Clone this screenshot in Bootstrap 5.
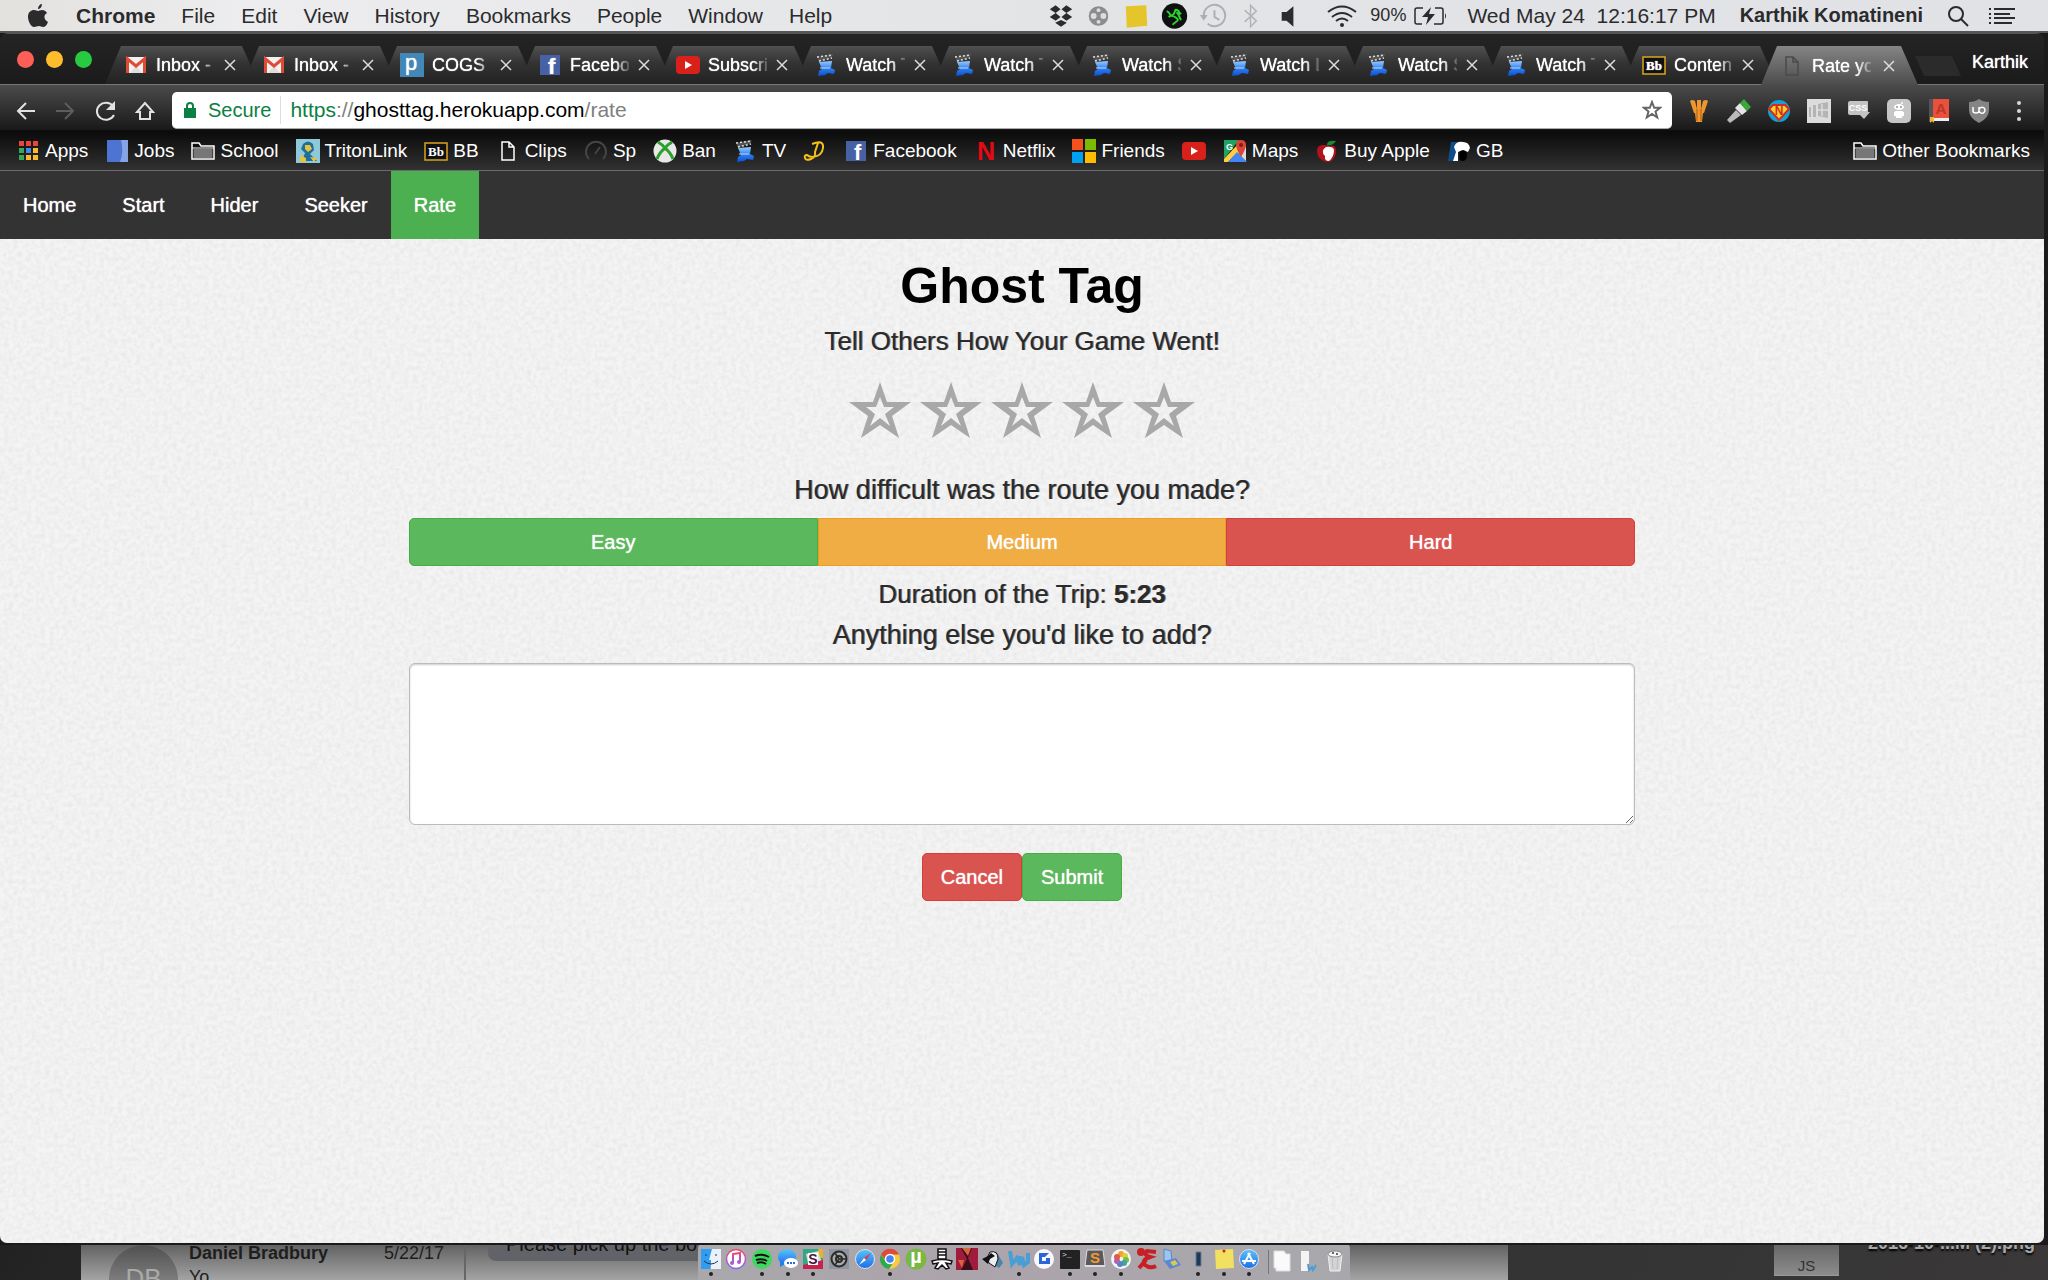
<!DOCTYPE html>
<html lang="en">
<head>
<meta charset="utf-8">
<meta name="viewport" content="width=device-width, initial-scale=1">
<title>Rate your game</title>
<link href="https://cdn.jsdelivr.net/npm/bootstrap@5.3.0/dist/css/bootstrap.min.css" rel="stylesheet">
<style>
body{font-family:"Liberation Sans",Arial,sans-serif;font-size:20px;line-height:30px;background:#1b1b1b;color:#2a2a2a;overflow:hidden}
svg{display:block;flex:none}
a{color:inherit;text-decoration:none}
/* system menu bar */
.menubar{height:33px;background:linear-gradient(90deg,#e2e1de,#ededef 12%,#e3e4e6 50%,#e1e2e6);border-bottom:2px solid #55565a;font-size:21px;line-height:31px;padding:0 33px 0 28px;color:#2b2b2d;white-space:nowrap}
.menus{gap:26px}
.slot{width:38px}
.slot-wide{width:58px}
.charge{font-size:18px}
.user-name{font-size:20px}
/* browser window */
.win{margin-right:4px;border-radius:8px 8px 7px 7px;overflow:hidden;background:#222;box-shadow:0 2px 0 #222}
.strip{height:51px;background:linear-gradient(#242424,#1b1b1b);padding-top:12px;border-top:1px solid #555;color:#fff;font-size:18px;text-shadow:0 0 1px #fff}
.lights{gap:12px;padding-left:17px;width:105px;padding-top:5px}
.light{width:17px;height:17px;border-radius:50%}
.tab-item{flex:0 1 154px;height:38px;margin-right:-16px;padding:0 23px 0 19px;background:linear-gradient(#505050,#333 45%,#222);clip-path:polygon(16px 0,calc(100% - 17px) 0,100% 100%,0 100%);line-height:38px}
.tab-wrap{display:flex;flex:1;min-width:0}
.tab-on{background:linear-gradient(#858585,#4c4c4c);height:39px;flex-basis:157px}
.fav{width:24px;height:24px}
.tab-name{width:59px;overflow:hidden;white-space:nowrap;margin-left:8px;-webkit-mask-image:linear-gradient(90deg,#000 75%,#0003 100%);mask-image:linear-gradient(90deg,#000 75%,#0003 100%)}
.bare{background:none;border:0;padding:0;color:inherit}
.newtab{width:46px;height:20px;margin:10px 0 0 13px;background:#2b2b2b;clip-path:polygon(0 0,37px 0,100% 100%,9px 100%)}
.who{margin-right:16px;line-height:32px}
.toolbar{height:48px;background:linear-gradient(#4b4b4b,#191919);border-top:1px solid #777;border-bottom:2px solid #0c0c0c;padding:6px 5px 0 5px}
.tool{width:40px}
.omni{height:37px;border-radius:5px;background:#fff;margin:0 7px;padding:0 10px 0 12px;border-bottom:1px solid #aaa}
.secure{color:#0b8043;border-right:1px solid #ddd;padding-right:9px;margin-right:9px;line-height:28px}
.url{font-size:21px;color:#000}
.url .s{color:#0b8043}.url .g{color:#808080}
.marks{height:38px;background:linear-gradient(#0b0b0b,#313131);padding:0 14px 0 16px;font-size:19px;color:#fff;gap:17px;white-space:nowrap}
.marks a{display:flex;align-items:center;gap:5px}
/* site */
.topnav{height:69px;background:#333;border-top:1px solid #6b6b6b;color:#fff;text-shadow:0 0 1px #fff}
.topnav a{padding:0 23px;line-height:68px}
.topnav .here{background:#4caf50}
.site{background:#f4f4f4}
.grain{position:absolute;inset:0;width:100%;height:100%}
.glow{position:absolute;left:30%;right:30%;bottom:0;height:80px;background:radial-gradient(closest-side at 50% 100%,#0002,#0000)}
.pane{position:relative;width:60%;padding-top:17px}
.pane h1{font-size:50px;line-height:60px;font-weight:700;color:#000;margin-bottom:10px}
.mid,.ask{line-height:30px;font-weight:400;color:#2a2a2a;text-shadow:1px 0 0 #2a2a2a99;margin:0}
.mid{font-size:26px}
.ask{font-size:27px}
.stars{gap:9px;margin:26px 0 37px}
.pane .btn{font-size:20px;line-height:30px;padding:8px 18px;border-radius:5px;color:#fff;text-shadow:0 0 1px #fff}
.b-green{background:#5cb85c;border-color:#45ae45}
.b-amber{background:#f0ad44;border-color:#ee9d24}
.b-red{background:#d9534f;border-color:#d43f3a}
.pane .levels .btn{flex:1}
.pane .levels .b-green{border-radius:5px 0 0 5px}.pane .levels .b-amber{border-radius:0}.pane .levels .b-red{border-radius:0 5px 5px 0}
.pane .form-control{height:162px;border:1px solid #bbb;border-radius:6px;box-shadow:inset 0 1px 2px #0003}
.pane .gap-s{margin-top:13px}
.pane .gap-xs{margin-top:11px}
/* desktop behind the window */
.desk{height:37px;background:linear-gradient(120deg,#222,#484646 45%,#333 70%,#3a3838);position:relative;overflow:hidden;font-size:18px;border-top:2px solid #1a1a1a}
.chat{width:calc(70% - 7px);margin-left:81px;background:linear-gradient(#626262,#a4a4a4);color:#1e1e1e}
.people{width:385px;border-right:2px solid #666;padding:0 20px 0 28px}
.ava{width:69px;height:69px;border-radius:50%;background:linear-gradient(#505050,#7c7c7c 50%);color:#aaa;font-size:26px;line-height:66px;text-align:center;flex:none;margin-right:11px}
.who-line{line-height:22px;margin-top:-3px}
.yo{line-height:26px}
.bubble{margin-left:22px;height:16px;background:#626368;padding:0 14px 0 18px;border-radius:0 0 0 8px;overflow:hidden;color:#111;font-size:20px;display:flex;align-items:flex-end;line-height:34px}
.doc-js{width:65px;height:31px;background:linear-gradient(#666,#8d8d8d);margin-left:auto;color:#333;font-size:15px;padding-top:9px;text-align:center;line-height:24px;border-bottom:1px solid #999}
.fname{color:#a8a8a8;font-weight:700;margin:-17px 13px 0 29px;text-shadow:0 2px 2px #000;white-space:nowrap}
.dock{position:absolute;left:50%;transform:translateX(-50%);bottom:0;width:652px;height:37px;border-radius:6px 6px 0 0;background:linear-gradient(90deg,#a9a8ab,#aca4ab 40%,#a8a8ac);border-top:1px solid #bcbcbc;padding:4px 2px 0 0}
.apps{width:564px;display:flex}
.apps a{flex:1;display:flex;flex-direction:column;align-items:center}
.run::after{content:"";width:4px;height:4px;border-radius:50%;background:#222;margin-top:2px}
.rest{flex:1;display:flex;justify-content:space-around;border-left:1px solid #777;margin:2px 0 6px 6px}
</style>
<script src="https://cdn.jsdelivr.net/npm/bootstrap@5.3.0/dist/js/bootstrap.bundle.min.js"></script>
</head>
<body class="vh-100 d-flex flex-column">
<svg width="0" height="0" class="position-absolute" aria-hidden="true">
<defs>
<linearGradient id="bl" x1="0" y1="0" x2="0" y2="1"><stop offset="0" stop-color="#9cf"/><stop offset=".5" stop-color="#2f7ff0"/><stop offset="1" stop-color="#0b4fd0"/></linearGradient>
<linearGradient id="sk" x1="0" y1="0" x2="0" y2="1"><stop offset="0" stop-color="#5ac3fb"/><stop offset="1" stop-color="#1a6de8"/></linearGradient>
<linearGradient id="mu" x1="0" y1="0" x2="0" y2="1"><stop offset="0" stop-color="#f5466b"/><stop offset="1" stop-color="#7d6cf0"/></linearGradient>
<filter id="nz" x="0" y="0" width="100%" height="100%"><feTurbulence type="fractalNoise" baseFrequency=".22" numOctaves="3" seed="4"/><feColorMatrix values="0 0 0 0 0  0 0 0 0 0  0 0 0 0 0  .5 0 0 0 -.15"/></filter>
</defs>
<symbol id="gmail" viewBox="0 0 24 24"><path fill="#f4f1ee" d="M3 4h18v16H3z"/><path fill="#ddd" d="M6 20 12 13l6 7z"/><path fill="none" stroke="#dd4b39" stroke-width="3" d="M3.500 20V6L12 13l8.500-7v14"/></symbol>
<symbol id="yt" viewBox="0 0 24 24"><rect y="3" width="24" height="18" rx="4" fill="#d9211c"/><path fill="#fff" d="m9 8 7 4-7 4z"/></symbol>
<symbol id="clap" viewBox="0 0 24 24"><path fill="#555" d="M3 4 18 1v3L5 9z"/><path stroke="#ddd" stroke-width="1.500" stroke-dasharray="2 2" fill="none" d="M3 4 19 2M5 8 18 5"/><path fill="url(#bl)" d="m5 9 13-1-1 7 4 2-1 4-6-1-3 2-7 1 1-5 3-2z"/><path stroke="#bfdcff" d="M6 15h10"/></symbol>
<symbol id="page" viewBox="0 0 24 24"><path fill="none" stroke="currentColor" stroke-width="1.500" d="M6 3h7l5 5v13H6zM13 3v5h5"/></symbol>
<symbol id="fold" viewBox="0 0 24 24"><path fill="#111" stroke="#fff" stroke-width="1.500" d="M1 20V4h7l2 3h13v13z"/><path fill="#777" d="M2.500 10h19v9h-19z"/><path stroke="#fff" d="M1 9h22"/></symbol>
<symbol id="x" viewBox="0 0 12 12"><path stroke="#ddd" stroke-width="1.500" d="m1 1 10 10M11 1 1 11"/></symbol>
<symbol id="star" viewBox="0 0 62 56"><path fill="#a8a8a8" fill-rule="evenodd" d="M31 0 38 20H62L43 34 50 56 31 43 12 56 19 34 0 20H24ZM31 15 27 25H17L26 32 21 44 31 36 41 44 36 32 45 25H35Z"/></symbol>
</svg>

<header class="menubar d-flex align-items-center">
  <svg width="20" height="23" viewBox="0 0 20 23"><path fill="#2b2b2d" d="M14 6c2 0 4 1 5 3-4 2-3 7 1 9-1 3-3 5-5 5s-2-1-4-1-3 1-5 1C3 23 0 17 0 13c0-5 3-7 6-7 2 0 3 1 4 1s2-1 4-1zM10 5c0-3 2-5 4-5 0 3-2 5-4 5z"/></svg>
  <nav class="menus d-flex ms-4 ps-1"><a href="#"><b>Chrome</b></a><a href="#">File</a><a href="#">Edit</a><a href="#">View</a><a href="#">History</a><a href="#">Bookmarks</a><a href="#">People</a><a href="#">Window</a><a href="#">Help</a></nav>
  <div class="d-flex align-items-center ms-auto">
    <svg class="slot" height="26" viewBox="-8 0 39 26"><path fill="#2b2b2d" d="m6 2 5 4-5 4-6-4zM17 2l6 4-6 4-5-4zM6 10l5 4-5 4-6-4zM17 10l6 4-6 4-5-4zM11.500 17l6 3-6 4-6-4z"/></svg>
    <svg class="slot" height="26" viewBox="-9 0 39 26"><circle cx="10" cy="13" r="10" fill="#8c8c8e"/><g fill="#ddd"><circle cx="10" cy="7" r="2"/><circle cx="5" cy="13" r="3"/><circle cx="15" cy="13" r="3"/><circle cx="10" cy="19" r="2"/></g></svg>
    <svg class="slot" height="26" viewBox="-8 0 39 26"><path fill="#e4c62a" d="m0 3 21-1 1 21L1 25z"/></svg>
    <svg class="slot" height="26" viewBox="-6 0 39 26"><circle cx="13" cy="13" r="13" fill="#101010"/><path fill="none" stroke="#2bd52b" stroke-width="2" d="M5 8c5 2 2 6 6 4s1-7 5-5 0 5 4 3M7 14c3-3 7 0 9 2s-3 3-5 6M15 9c4 3 2 6 5 8"/></svg>
    <svg class="slot" height="26" viewBox="-6 0 39 26" fill="none" stroke="#aeaeb2" stroke-width="2"><path d="M4 13a11 11 0 1 1 4 8M15 7v7l5 3"/><path fill="#aeaeb2" stroke="none" d="M0 12h8l-4 6z"/></svg>
    <svg class="slot" height="26" viewBox="-12 0 39 26" fill="none" stroke="#b4b4b8" stroke-width="1.500"><path d="m1 7 12 11-6 6V2l6 6L1 19"/></svg>
    <svg class="slot" height="26" viewBox="-12 0 39 26"><path fill="#2b2b2d" d="M0 9h5l7-6v21l-7-6H0z"/></svg>
    <svg class="slot-wide" height="26" viewBox="-19 0 58 26" fill="none" stroke="#2b2b2d" stroke-width="2"><path d="M1 9q14-11 28 0M5 14q10-8 20 0M9 18q6-5 12 0"/><circle cx="15" cy="22" r="2" fill="#2b2b2d" stroke="none"/></svg>
    <span class="charge ms-1">90%</span>
    <svg class="ms-2" width="33" height="20" viewBox="0 0 33 20" fill="none" stroke="#2b2b2d" stroke-width="1.500"><path d="M9 2H3Q1 2 1 4v12q0 2 2 2h5M21 2h6q2 0 2 2v12q0 2-2 2h-7"/><path fill="#2b2b2d" stroke="none" d="m17 1-9 10h6l-2 8 9-11h-6zM31 7q2 3 0 6z"/></svg>
    <span class="ms-3 ps-1">Wed May 24 &nbsp;12:16:17 PM</span>
    <b class="user-name ms-4">Karthik Komatineni</b>
    <svg class="ms-4 me-1" width="22" height="22" viewBox="0 0 22 22" fill="none" stroke="#2b2b2d" stroke-width="2"><circle cx="9" cy="9" r="7"/><path d="m14 14 7 7"/></svg>
    <svg class="ms-3" width="26" height="16" viewBox="0 0 26 16" stroke="#2b2b2d" stroke-width="2"><path d="M0 1h2M5 1h21M0 6h2M5 6h16M0 10h2M5 10h21M0 15h2M5 15h18"/></svg>
  </div>
</header>

<div class="win flex-grow-1 d-flex flex-column">
  <div class="strip d-flex align-items-start">
    <div class="lights d-flex"><span class="light" style="background:#ff5f57"></span><span class="light" style="background:#ffbd2e"></span><span class="light" style="background:#28ca41"></span></div>
    <div class="tab-wrap">
      <div class="tab-item d-flex align-items-center"><svg class="fav"><use href="#gmail"/></svg><a class="tab-name" href="#">Inbox -</a><button class="bare ms-auto" aria-label="Close"><svg width="12" height="12"><use href="#x"/></svg></button></div>
      <div class="tab-item d-flex align-items-center"><svg class="fav"><use href="#gmail"/></svg><a class="tab-name" href="#">Inbox -</a><button class="bare ms-auto" aria-label="Close"><svg width="12" height="12"><use href="#x"/></svg></button></div>
      <div class="tab-item d-flex align-items-center"><svg class="fav" viewBox="0 0 24 24"><path fill="#4187b8" d="M0 0h24v24H0z"/><text x="5" y="17" font-size="22" font-family="Liberation Sans" fill="#fff">p</text></svg><a class="tab-name" href="#">COGS 1</a><button class="bare ms-auto" aria-label="Close"><svg width="12" height="12"><use href="#x"/></svg></button></div>
      <div class="tab-item d-flex align-items-center"><svg class="fav" viewBox="0 0 24 24"><rect x="2" y="2" width="20" height="20" fill="#4662a5"/><text x="10" y="21" font-size="22" font-weight="700" font-family="Liberation Sans" fill="#fff">f</text></svg><a class="tab-name" href="#">Facebo</a><button class="bare ms-auto" aria-label="Close"><svg width="12" height="12"><use href="#x"/></svg></button></div>
      <div class="tab-item d-flex align-items-center"><svg class="fav"><use href="#yt"/></svg><a class="tab-name" href="#">Subscri</a><button class="bare ms-auto" aria-label="Close"><svg width="12" height="12"><use href="#x"/></svg></button></div>
      <div class="tab-item d-flex align-items-center"><svg class="fav"><use href="#clap"/></svg><a class="tab-name" href="#">Watch T</a><button class="bare ms-auto" aria-label="Close"><svg width="12" height="12"><use href="#x"/></svg></button></div>
      <div class="tab-item d-flex align-items-center"><svg class="fav"><use href="#clap"/></svg><a class="tab-name" href="#">Watch T</a><button class="bare ms-auto" aria-label="Close"><svg width="12" height="12"><use href="#x"/></svg></button></div>
      <div class="tab-item d-flex align-items-center"><svg class="fav"><use href="#clap"/></svg><a class="tab-name" href="#">Watch S</a><button class="bare ms-auto" aria-label="Close"><svg width="12" height="12"><use href="#x"/></svg></button></div>
      <div class="tab-item d-flex align-items-center"><svg class="fav"><use href="#clap"/></svg><a class="tab-name" href="#">Watch L</a><button class="bare ms-auto" aria-label="Close"><svg width="12" height="12"><use href="#x"/></svg></button></div>
      <div class="tab-item d-flex align-items-center"><svg class="fav"><use href="#clap"/></svg><a class="tab-name" href="#">Watch S</a><button class="bare ms-auto" aria-label="Close"><svg width="12" height="12"><use href="#x"/></svg></button></div>
      <div class="tab-item d-flex align-items-center"><svg class="fav"><use href="#clap"/></svg><a class="tab-name" href="#">Watch T</a><button class="bare ms-auto" aria-label="Close"><svg width="12" height="12"><use href="#x"/></svg></button></div>
      <div class="tab-item d-flex align-items-center"><svg class="fav" viewBox="0 0 24 24"><rect x="1" y="4" width="22" height="17" fill="#111" stroke="#d9a520" stroke-width="1.500"/><text x="12" y="17" font-size="13" text-anchor="middle" font-weight="700" font-family="Liberation Serif" fill="#fff">Bb</text></svg><a class="tab-name" href="#">Conten</a><button class="bare ms-auto" aria-label="Close"><svg width="12" height="12"><use href="#x"/></svg></button></div>
      <div class="tab-item tab-on d-flex align-items-center"><svg class="fav" color="#4a4a4a"><use href="#page"/></svg><a class="tab-name" href="#">Rate yo</a><button class="bare ms-auto" aria-label="Close"><svg width="12" height="12"><use href="#x"/></svg></button></div>
      <button class="bare newtab" aria-label="New tab"></button>
    </div>
    <a class="who" href="#">Karthik</a>
  </div>

  <div class="toolbar d-flex align-items-center">
    <button class="bare tool" aria-label="Back"><svg width="40" height="24" viewBox="-11 -2 40 24" fill="none" stroke="#e2e2e2" stroke-width="2"><path d="M19 10H2M10 2l-8 8 8 8"/></svg></button>
    <button class="bare tool" aria-label="Forward"><svg width="40" height="24" viewBox="-11 -2 40 24" fill="none" stroke="#5d5d5d" stroke-width="2"><path d="M0 10h17M9 2l8 8-8 8"/></svg></button>
    <button class="bare tool" aria-label="Reload"><svg width="40" height="24" viewBox="-11 -2 40 24" fill="none" stroke="#e2e2e2" stroke-width="2"><path d="M18 14a9 8.500 0 1 1-1-9"/><path fill="#e2e2e2" stroke="none" d="M19 0v9h-9z"/></svg></button>
    <button class="bare tool" aria-label="Home"><svg width="40" height="24" viewBox="-11 -2 40 24" fill="none" stroke="#e2e2e2" stroke-width="2"><path d="M9 2 1 11h3v7h10v-7h3z"/></svg></button>
    <div class="omni flex-grow-1 d-flex align-items-center">
      <div class="secure d-flex align-items-center gap-2"><svg class="me-1" width="12" height="16" viewBox="0 0 12 16"><path fill="#0b8043" d="M0 6h12v10H0z"/><path fill="none" stroke="#0b8043" stroke-width="2" d="M3 7V4q0-3 3-3t3 3v3"/></svg>Secure</div>
      <a class="url" href="#"><span class="s">https</span><span class="g">://</span>ghosttag.herokuapp.com<span class="g">/rate</span></a>
      <button class="bare ms-auto" aria-label="Bookmark"><svg width="20" height="20" viewBox="0 0 20 20" fill="none" stroke="#666" stroke-width="2"><path d="m10 2 2.200 5.800H18l-4.500 3.700 1.700 6L10 14l-5.200 3.500 1.700-6L2 7.800h5.800z"/></svg></button>
    </div>
    <svg class="tool" height="24" viewBox="-8 0 40 24"><path fill="#f0962e" d="M3 2q2-2 5 0l2 8V1h4v9l2-8q3-2 5 0l-4 12h-1l-1 9H9l-1-9H7z"/><path stroke="#a85a10" d="M10 10v12M14 10v12"/></svg>
    <svg class="tool" height="24" viewBox="-8 0 40 24"><path fill="#bbb" d="m0 21 9-10 5 5-11 8z"/><path fill="#e4e4e4" d="m8 9 5-5 7 8-5 4z"/><path fill="#38a838" d="m13 4 4-4 7 8-4 4z"/></svg>
    <svg class="tool" height="24" viewBox="-8 0 40 24"><circle cx="12" cy="12" r="11" fill="#15a0d8"/><path fill="#f6d32a" stroke="#d62b1f" stroke-width="2" d="M6 6h12l4 4-10 11L2 10z"/><text x="12" y="16" text-anchor="middle" font-size="12" font-weight="700" font-family="Liberation Sans" fill="#d62b1f">N</text></svg>
    <svg class="tool" height="24" viewBox="-8 0 40 24"><path fill="#dcdcdc" d="M0 0h24v24H0z"/><path fill="#b4b4b4" d="M2 8h2v10H2zM6 6h3v12H6zM11 5l10-2v16l-10-2z"/><path stroke="#ddd" stroke-width="1.500" d="M15 5v12M11 11h10"/></svg>
    <svg class="tool" height="24" viewBox="-8 0 40 24"><path fill="#c4c4c4" d="M3 2h17q1 0 1 1v10h2l-6 7-4-4H3q-2 0-2-2V4q0-2 2-2z"/><text x="11" y="12" text-anchor="middle" font-size="9" font-weight="700" font-family="Liberation Sans" fill="#fff">CSS</text></svg>
    <svg class="tool" height="24" viewBox="-8 0 40 24"><rect width="24" height="24" rx="5" fill="#c6c6c6"/><g fill="#fff"><ellipse cx="12" cy="8" rx="5" ry="3"/><path d="M8 12h8l-1 7h-6z"/><path d="M7 13h2v4H7zM15 13h2v4h-2z"/><circle cx="15" cy="4" r="1"/></g><circle cx="10" cy="8" r="1" fill="#999"/><circle cx="14" cy="8" r="1" fill="#999"/></svg>
    <svg class="tool" height="24" viewBox="-8 0 40 24"><path fill="#e9513c" d="M2 0h20v20H2z"/><path fill="#555" d="M2 0h4v23H2z"/><path fill="#eee" d="M6 19h16v3H6z"/><path fill="#f4b92a" d="M3 18h4v6l-2-2-2 2z"/><text x="14" y="15" text-anchor="middle" font-size="15" font-weight="700" font-family="Liberation Sans" fill="#b93826">A</text></svg>
    <svg class="tool" height="24" viewBox="-8 0 40 24"><path fill="#858585" d="M12 0q4 3 10 3v8q0 8-10 13Q2 19 2 11V3q6 0 10-3z"/><path fill="none" stroke="#fff" stroke-width="1.500" d="M6 8v4q0 2 3 2t3-2V8M12 11a3 3 0 1 1 0 .5"/></svg>
    <svg class="tool" height="24" viewBox="-8 0 40 24" fill="#d8d8d8"><circle cx="12" cy="4" r="2"/><circle cx="12" cy="12" r="2"/><circle cx="12" cy="20" r="2"/></svg>
  </div>

  <nav class="marks d-flex align-items-center">
    <a href="#"><svg class="fav" viewBox="0 0 24 24"><path fill="#e8453c" d="M3 2h5v5H3zM10 2h5v5h-5zM17 2h5v5h-5z"/><path fill="#3aa757" d="M3 9h5v5H3z"/><path fill="#4688f1" d="M10 9h5v5h-5z"/><path fill="#f9bb2d" d="M17 9h5v5h-5zM10 16h5v5h-5zM17 16h5v5h-5z"/><path fill="#3aa757" d="M3 16h5v5H3z"/></svg>Apps</a>
    <a href="#"><svg class="fav" viewBox="0 0 24 24"><path fill="#4d74d2" d="M2 1h21v22H2z"/><path fill="#86a4e4" d="M23 1v22h-8q4-10 1-22z"/></svg>Jobs</a>
    <a href="#"><svg class="fav"><use href="#fold"/></svg>School</a>
    <a href="#"><svg class="fav" viewBox="0 0 24 24"><path fill="#8ec9da" d="M0 0h24v24H0z"/><path fill="#1f6f9a" d="M7 5q5-5 10 0l1 6-4 4 7 7H6l3-8-4-4z"/><path fill="#e8c33c" d="M9 6h5l2 4-4 3-3-3zM4 16l6 3v4H4zM14 18l7 1-3 4z"/></svg>TritonLink</a>
    <a href="#"><svg class="fav" viewBox="0 0 24 24"><rect x="1" y="4" width="22" height="17" fill="#111" stroke="#d9a520" stroke-width="1.500"/><text x="12" y="17" font-size="13" text-anchor="middle" font-weight="700" font-family="Liberation Serif" fill="#fff">Bb</text></svg>BB</a>
    <a href="#"><svg class="fav"><use href="#page"/></svg>Clips</a>
    <a href="#"><svg class="fav" viewBox="0 0 24 24" fill="none" stroke="#444" stroke-width="2"><path d="M5 20a10 10 0 1 1 14 0M11 15l5-7"/></svg>Sp</a>
    <a href="#"><svg class="fav" viewBox="0 0 24 24"><circle cx="12" cy="12" r="11.500" fill="#e8e8e8"/><path fill="none" stroke="#2ca02c" stroke-width="3" d="M5 3q5 3 7 6 2-3 7-6M12 9q-6 5-8 11M12 9q6 5 8 11"/></svg>Ban</a>
    <a href="#"><svg class="fav"><use href="#clap"/></svg>TV</a>
    <a href="#" aria-label="D"><svg class="fav" viewBox="0 0 24 24" fill="none" stroke="#f2c11c" stroke-width="2"><path d="M9 5q12-5 11 4-1 8-10 9-4 0-6-2-3 0-2 3t6 1 4-7l3-9"/></svg></a>
    <a href="#"><svg class="fav" viewBox="0 0 24 24"><rect x="2" y="2" width="20" height="20" fill="#4662a5"/><text x="10" y="21" font-size="22" font-weight="700" font-family="Liberation Sans" fill="#fff">f</text></svg>Facebook</a>
    <a href="#"><svg class="fav" viewBox="0 0 24 24"><text x="12" y="21" text-anchor="middle" font-size="25" font-weight="700" font-family="Liberation Sans" fill="#e50914">N</text></svg>Netflix</a>
    <a href="#"><svg class="fav" viewBox="0 0 24 24"><path fill="#f4511e" d="M0 0h11v11H0z"/><path fill="#7cbb00" d="M13 0h11v11H13z"/><path fill="#00a1f1" d="M0 13h11v11H0z"/><path fill="#ffbb00" d="M13 13h11v11H13z"/></svg>Friends</a>
    <a href="#" aria-label="YouTube"><svg class="fav"><use href="#yt"/></svg></a>
    <a href="#"><svg class="fav" viewBox="0 0 24 24"><path fill="#1da462" d="M1 1h15L1 20z"/><path fill="#ffcd40" d="M1 20 16 4l4 4L5 23H1z"/><path fill="#4285f4" d="M5 23 14 13l10 10z"/><path fill="#ddd" d="m14 13 9-6v15z"/><path fill="#db4437" d="M13 6q0-5 5-5t5 5q0 4-5 12-5-8-5-12z"/><circle cx="18" cy="6" r="2" fill="#7d1f15"/><text x="3" y="11" font-size="9" font-weight="700" font-family="Liberation Sans" fill="#fff">G</text></svg>Maps</a>
    <a href="#"><svg class="fav" viewBox="0 0 24 24"><path fill="#b3121d" d="M8 6q5 0 6 1 7-2 7 5t-6 11q-2-1-4 0Q2 20 2 12q0-6 6-6z"/><path fill="#fff" d="M11 8q7-1 8 3 0 7-5 11-5 0-4-5-5-5 1-9z"/><path fill="#1c8a33" d="M12 6q0-5 9-4-3 5-9 4z"/></svg>Buy Apple</a>
    <a href="#"><svg class="fav" viewBox="0 0 24 24"><path fill="#0e4c8c" d="M4 3h8L8 22H1z"/><path fill="#fff" d="M7 8q2-6 9-5 6 0 7 6l-2 4-5-2-5 2v9H6l3-9z"/><path fill="#000" d="M13 12q7-2 7 4 0 6-5 6-4 0-2-10z"/></svg>GB</a>
    <a href="#" class="ms-auto"><svg class="fav"><use href="#fold"/></svg>Other Bookmarks</a>
  </nav>

  <nav class="topnav d-flex"><a href="#">Home</a><a href="#">Start</a><a href="#">Hider</a><a href="#">Seeker</a><a class="here" href="#">Rate</a></nav>

  <main class="site flex-grow-1 position-relative">
    <svg class="grain" aria-hidden="true"><rect width="100%" height="100%" filter="url(#nz)" opacity=".16"/></svg>
    <div class="glow"></div>
    <form class="pane mx-auto text-center">
      <h1>Ghost Tag</h1>
      <h2 class="mid">Tell Others How Your Game Went!</h2>
      <div class="stars d-flex justify-content-center" role="radiogroup" aria-label="Rating">
        <label><input class="visually-hidden" type="radio" name="r" aria-label="1"><svg width="62" height="56"><use href="#star"/></svg></label>
        <label><input class="visually-hidden" type="radio" name="r" aria-label="2"><svg width="62" height="56"><use href="#star"/></svg></label>
        <label><input class="visually-hidden" type="radio" name="r" aria-label="3"><svg width="62" height="56"><use href="#star"/></svg></label>
        <label><input class="visually-hidden" type="radio" name="r" aria-label="4"><svg width="62" height="56"><use href="#star"/></svg></label>
        <label><input class="visually-hidden" type="radio" name="r" aria-label="5"><svg width="62" height="56"><use href="#star"/></svg></label>
      </div>
      <h2 class="ask">How difficult was the route you made?</h2>
      <div class="levels d-flex gap-s"><button type="button" class="btn b-green">Easy</button><button type="button" class="btn b-amber">Medium</button><button type="button" class="btn b-red">Hard</button></div>
      <div class="mid gap-s">Duration of the Trip: <b>5:23</b></div>
      <label class="ask d-block gap-xs" for="more">Anything else you'd like to add?</label>
      <textarea id="more" class="form-control gap-s"></textarea>
      <div class="d-flex justify-content-center mt-4 pt-1"><button type="button" class="btn b-red">Cancel</button><button type="submit" class="btn b-green">Submit</button></div>
    </form>
  </main>
</div>

<div class="desk d-flex align-items-start">
  <div class="chat d-flex h-100 align-items-start">
    <div class="people d-flex h-100 align-items-start">
      <div class="ava">DB</div>
      <div class="flex-grow-1"><div class="who-line d-flex justify-content-between"><b>Daniel Bradbury</b><span>5/22/17</span></div><div class="yo">Yo</div></div>
    </div>
    <div class="bubble">Please pick up the box</div>
  </div>
  <div class="doc-js">JS</div>
  <div class="fname">2016-10-...M (2).png</div>
  <div class="dock d-flex">
    <div class="apps">
      <a class="run" href="#"><svg width="22" height="22" viewBox="0 0 22 22"><path fill="#2f9df4" d="M1 1h12L10 21H1z"/><path fill="#e9f2fb" d="M12 1h9v20H11V12H9z"/><path stroke="#234" fill="none" d="M6 6v2M16 6v2M4 13q7 6 14 0"/></svg></a>
      <a href="#"><svg width="22" height="22" viewBox="0 0 22 22"><circle cx="11" cy="11" r="9.500" fill="#fff" stroke="url(#mu)" stroke-width="1.500"/><path fill="none" stroke="url(#mu)" stroke-width="2" d="M8 15V6l7-1v9"/><circle cx="7" cy="15" r="2" fill="#b25ad0"/><circle cx="14" cy="14" r="2" fill="#b25ad0"/></svg></a>
      <a class="run" href="#"><svg width="22" height="22" viewBox="0 0 22 22"><circle cx="11" cy="11" r="10" fill="#3ed860"/><path fill="none" stroke="#111" stroke-width="2" d="M4 8q7-3 14 1M5 12q6-2 11 1M6 15q5-2 9 1"/></svg></a>
      <a class="run" href="#"><svg width="22" height="22" viewBox="0 0 22 22"><ellipse cx="10" cy="9" rx="9" ry="8" fill="url(#sk)"/><path fill="#2080ee" d="m3 13 0 6 5-3z"/><ellipse cx="14" cy="15" rx="7" ry="5" fill="#fff"/><path stroke="#2a6fd0" stroke-width="2" stroke-dasharray="2 1" d="M10 15h8"/></svg></a>
      <a class="run" href="#"><svg width="22" height="22" viewBox="0 0 22 22"><path fill="#2fa88a" d="M1 1h20v20H1z"/><path fill="#e5e0d4" d="m4 6 13-3 3 14-13 3z"/><path fill="#c9204d" d="m1 17 20-5v9H1z"/><path fill="#e8b32c" d="m16 1 5 0v9h-3z"/><path fill="#fff" d="M6 5h10v12H6z"/><text x="11" y="16" text-anchor="middle" font-size="14" font-weight="700" font-family="Liberation Sans" fill="#4a1740">S</text></svg></a>
      <a href="#"><svg width="22" height="22" viewBox="0 0 22 22"><path fill="#8e979f" d="M1 1h20v20H1z"/><circle cx="11" cy="11" r="7.500" fill="#aaa" stroke="#2b2b2b" stroke-width="2"/><circle cx="11" cy="11" r="3" fill="none" stroke="#2b2b2b" stroke-width="2"/><path stroke="#2b2b2b" stroke-width="1.500" d="M11 11h7M11 11 7 5M11 11l-4 6"/></svg></a>
      <a href="#"><svg width="22" height="22" viewBox="0 0 22 22"><circle cx="11" cy="11" r="9.500" fill="url(#sk)" stroke="#e4e4e4"/><path fill="#e33" d="m17 5-7 5 2 2z"/><path fill="#fff" d="m5 17 5-7 2 2z"/></svg></a>
      <a class="run" href="#"><svg width="22" height="22" viewBox="0 0 22 22"><circle cx="11" cy="11" r="10" fill="#f7cb3b"/><path fill="#dd4b3e" d="M2 6.500a10 10 0 0 1 18 0H11L7 13z"/><path fill="#2da94f" d="M2 6.500a10 10 0 0 0 8 14.500l4-6-7-1z"/><circle cx="11" cy="11" r="4.500" fill="#4285f4" stroke="#fff" stroke-width="1.500"/></svg></a>
      <a href="#"><svg width="22" height="22" viewBox="0 0 22 22"><circle cx="11" cy="11" r="10.500" fill="#78b843"/><text x="11" y="15" text-anchor="middle" font-size="20" font-weight="700" font-family="Liberation Sans" fill="#fff">µ</text></svg></a>
      <a href="#"><svg width="22" height="22" viewBox="0 0 22 22" stroke="#111" stroke-width="1.500" fill="#fff"><path d="M7 1h8v10H7zM7 4h8M7 7h8M1 13q10-3 20 0l-1 3-5-1 3 5-3 1-4-4-4 4-3-1 3-5-5 1z"/></svg></a>
      <a href="#"><svg width="22" height="22" viewBox="0 0 22 22"><path fill="#3a0f1c" d="M0 0h22v22H0z"/><path fill="#a01c3c" d="M0 0h5l6 11L5 22H0zM22 0h-6l-4 10 5 12h5z"/><path fill="#d8643c" d="m6 0 6 8 3-8zM2 12l4 8 2-8z"/></svg></a>
      <a href="#"><svg width="22" height="22" viewBox="0 0 22 22"><path fill="#4d82ad" d="m14 3 7 12-4 5-6-4z"/><path fill="#eee" stroke="#111" d="M8 4q8-2 8 7l-3 8-6-4-2-5z"/><path fill="#111" d="M0 11 6 8l3-3 4 3-5 3-2 5z"/></svg></a>
      <a class="run" href="#"><svg width="22" height="22" viewBox="0 0 22 22" fill="none" stroke="#4a9ed6" stroke-width="4"><path d="m2 3 2 13 5-6 3 7V8M14 9l2 8 4-3V5"/></svg></a>
      <a href="#"><svg width="22" height="22" viewBox="0 0 22 22"><circle cx="11" cy="11" r="10" fill="#f7f9fc"/><path fill="#2b66d8" d="M6 5h10l-4 4H9v4h4v-3h4v6H6z"/></svg></a>
      <a class="run" href="#"><svg width="22" height="22" viewBox="0 0 22 22"><rect x="1" y="2" width="20" height="19" rx="1" fill="#222"/><text x="3" y="9" font-size="8" font-family="Liberation Mono" fill="#ddd">&gt;_</text></svg></a>
      <a class="run" href="#"><svg width="22" height="22" viewBox="0 0 22 22"><path fill="#595959" stroke="#ddd" d="M3 2h16l2 16H1z"/><path fill="#ddd" d="M1 17h20v2H1z"/><text x="11" y="15" text-anchor="middle" font-size="15" font-weight="700" font-family="Liberation Sans" fill="#f79a2b">S</text></svg></a>
      <a class="run" href="#"><svg width="22" height="22" viewBox="0 0 22 22"><circle cx="11" cy="11" r="10" fill="#f5f5f5"/><circle cx="11" cy="6" r="3" fill="#f3a02c"/><circle cx="15" cy="8" r="3" fill="#e0cf34"/><circle cx="16" cy="12" r="3" fill="#74bb4b"/><circle cx="14" cy="15" r="3" fill="#3fa89a"/><circle cx="10" cy="16" r="3" fill="#5a7fc7"/><circle cx="7" cy="13" r="3" fill="#a26ab5"/><circle cx="7" cy="9" r="3" fill="#e2574c"/></svg></a>
      <a href="#"><svg width="22" height="22" viewBox="0 0 22 22"><circle cx="5" cy="4" r="4" fill="#c81f24"/><path fill="none" stroke="#c81f24" stroke-width="4" d="m20 4-9-1q-4 4 3 6Q5 12 9 17q5 4 11 1M3 20l7-8"/></svg></a>
      <a href="#"><svg width="22" height="22" viewBox="0 0 22 22"><path fill="#9cc5f0" stroke="#5c86c8" d="m3 1 7 2 1 11-8-1z"/><path fill="#5a86d8" d="m3 13 12-3 5 7-11 4z"/><path fill="#d9c94e" d="m9 14 5-2 3 4-5 2z"/></svg></a>
      <a class="run" href="#"><svg width="22" height="22" viewBox="0 0 22 22"><path fill="#1d3b57" stroke="#6b7d90" d="M9 4h5v14H9z"/></svg></a>
      <a class="run" href="#"><svg width="22" height="22" viewBox="0 0 22 22"><path fill="#f2e060" d="m2 2 18-1 1 19-18 1z"/><circle cx="11" cy="3" r="1.500" fill="#c22"/></svg></a>
      <a class="run" href="#"><svg width="22" height="22" viewBox="0 0 22 22"><circle cx="11" cy="11" r="9.500" fill="url(#sk)" stroke="#dde"/><path fill="none" stroke="#fff" stroke-width="2" d="m12 5-6 11M10 5l6 11M4 13h14"/></svg></a>
    </div>
    <div class="rest">
      <svg width="20" height="22" viewBox="0 0 20 22"><path fill="#fafafa" stroke="#ddd" d="M2 1h10l2 3h4v17H4v-3H2z"/></svg>
      <svg width="20" height="22" viewBox="0 0 20 22"><path fill="#f4f4f4" d="M3 1h8v20H3z"/><path fill="none" stroke="#4a9ed6" stroke-width="2" d="m10 14 1 6 3-3 1 3 3-5"/></svg>
      <svg width="20" height="22" viewBox="0 0 20 22"><path fill="#d4d4d4" stroke="#eee" d="m3 4 2 17h10l2-17z"/><path stroke="#bbb" d="m7 6 1 13M13 6l-1 13"/><ellipse cx="10" cy="4" rx="7" ry="3" fill="#f4f4f4" stroke="#888"/><circle cx="8" cy="3" r="1" fill="#433"/><circle cx="12" cy="4" r="1" fill="#433"/></svg>
    </div>
  </div>
</div>
</body>
</html>
